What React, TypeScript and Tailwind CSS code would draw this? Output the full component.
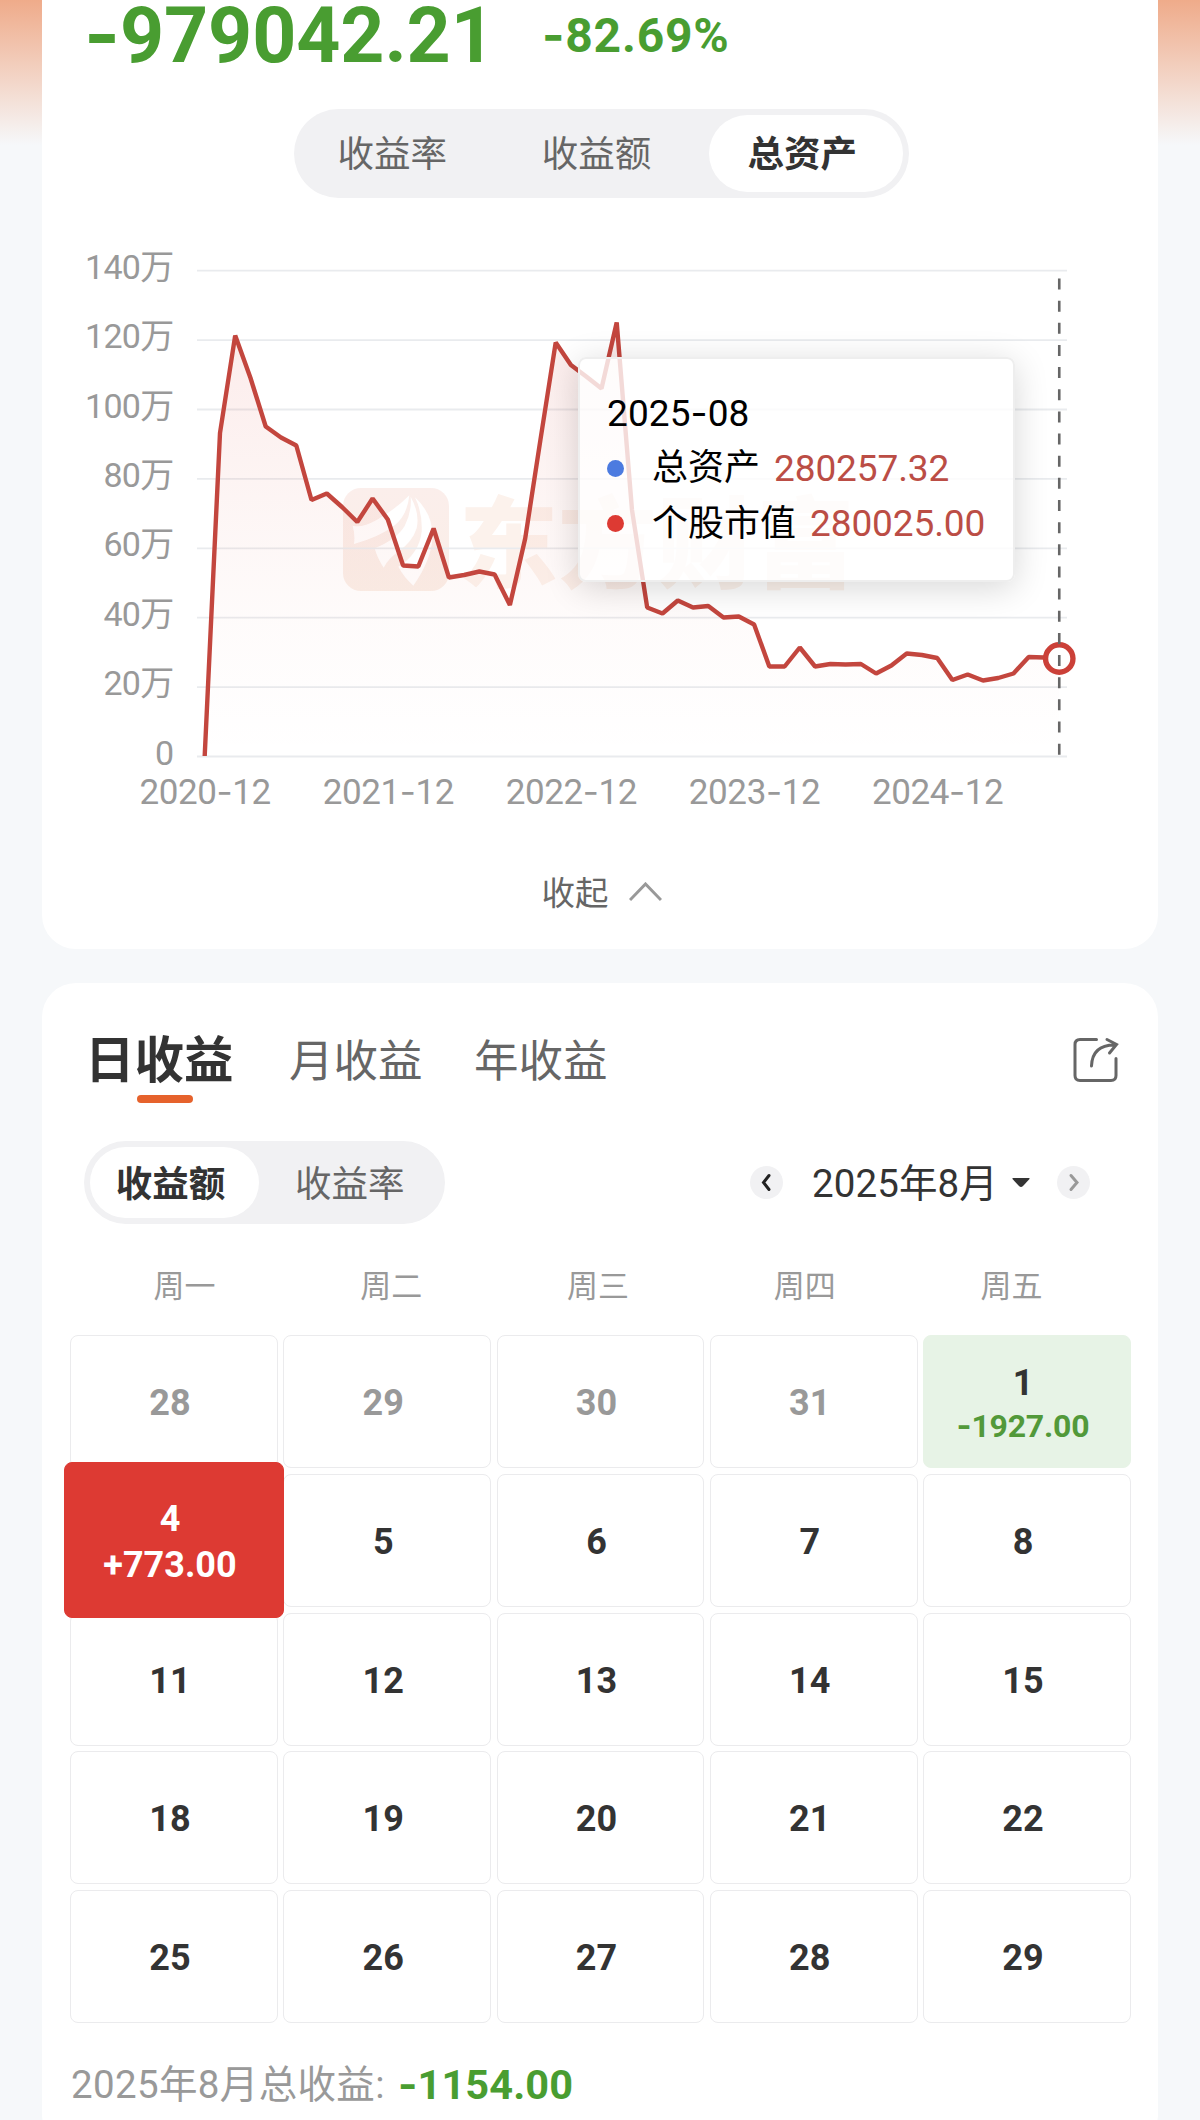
import clsx from 'clsx';
import { Fragment } from 'react';

const GRID_LABELS = ['140万', '120万', '100万', '80万', '60万', '40万', '20万', '0'];
const YEAR_LABELS = ['2020-12', '2021-12', '2022-12', '2023-12', '2024-12'];
const WEEKDAYS = ['周一', '周二', '周三', '周四', '周五'];

// one value per month, 2020-12 to 2025-08, as a height in the chart's own units
const SERIES = [
    756, 433, 335.5, 378, 426.5, 437.5, 445.5, 500, 493.5, 507, 522, 498.5, 519.5, 565.5, 566.5, 528.5, 577.5, 575, 571.5,
    574.5, 605, 538.5, 440, 342.5, 365, 376.5, 388.5, 322.5, 510, 607.5, 613.5, 600.5, 607.5, 606, 617.5, 616.5, 624.5,
    666.5, 666.5, 647.5, 666.5, 664, 664.5, 664, 673.5, 665.5, 653.5, 655, 658, 680, 674.5, 680.5, 678, 673.5, 657, 657.5,
    658.5,
];

type Day = { day: number; muted?: boolean; amount?: string; tone?: 'loss' | 'selected' };

const DAYS: Day[] = [
    { day: 28, muted: true },
    { day: 29, muted: true },
    { day: 30, muted: true },
    { day: 31, muted: true },
    { day: 1, amount: '-1927.00', tone: 'loss' },
    { day: 4, amount: '+773.00', tone: 'selected' },
    ...[5, 6, 7, 8, 11, 12, 13, 14, 15, 18, 19, 20, 21, 22, 25, 26, 27, 28, 29].map((day) => ({ day })),
];

const X0 = 204.7;
const STEP = 15.26;
const BASE = 756.5;

export default function App() {
    return (
        <div className="h-[2120px] w-[1200px] overflow-hidden bg-[#f6f8fa] bg-[linear-gradient(#efab8a,#f6f8fa_145px)] px-[42px] font-['Roboto','Noto_Sans_CJK_SC',sans-serif] leading-none text-[#333]">
            <section className="relative h-[949px] rounded-b-[34px] bg-white">
                <div className="flex h-[109px] items-start pl-[42px] font-bold text-[#499d31]">
                    <span className="w-[415px] text-[77px] leading-[69px] tracking-[-0.1px]">
                        <Num text="-979042.21" />
                    </span>
                    <span className="mt-[11px] ml-[43px] text-[48px] tracking-[0.8px]">
                        <Num text="-82.69%" />
                    </span>
                </div>

                <div className="mx-auto flex h-[89px] w-[615px] translate-x-px items-center rounded-full bg-[#f1f1f3] p-[6px] text-[36.5px] text-[#666]">
                    <span className="w-[205px] pt-[4px] pl-[38px]">收益率</span>
                    <span className="w-[206px] pt-[4px] pl-[38px]">收益额</span>
                    <span className="flex h-[77px] w-[194px] items-center justify-center rounded-full bg-white pt-[4px] pr-[7px] font-bold text-[#333]">
                        总资产
                    </span>
                </div>

                <div className="-mx-[42px] h-[640px]">
                    <AssetChart />
                </div>
                <Tooltip />

                <button type="button" className="mx-auto flex items-center gap-[20px] pt-[37px] pl-[3px] text-[33.5px] text-[#666]">
                    <span className="pt-[2px]">收起</span>
                    <svg className="-mt-[2px] h-[20px] w-[33px]" viewBox="0 0 33 20" fill="none" stroke="#999" strokeWidth="3">
                        <path d="M1 18 16.500 2 32 18" />
                    </svg>
                </button>
            </section>

            <section className="mt-[34px] h-[1165px] rounded-[34px] bg-white pt-[52px]">
                <div className="flex h-[50px] items-center pr-[39px] pl-[43px] text-[44.5px] text-[#666]">
                    <span className="relative w-[203px] pt-[4px] text-[49.5px] font-bold text-[#333]">
                        日收益
                        <i className="absolute top-[62px] left-[52px] h-[8px] w-[56px] rounded-full bg-[#e6622c]" />
                    </span>
                    <span className="w-[186px] pt-[4px] pl-px">月收益</span>
                    <span className="flex-1 pt-[4px]">年收益</span>
                    <ShareIcon />
                </div>

                <div className="mt-[56px] flex h-[83px] items-center pr-[68px] pl-[42px]">
                    <div className="flex h-[83px] w-[361px] items-center rounded-full bg-[#f1f1f3] p-[6px] text-[36.5px] text-[#666]">
                        <span className="flex h-[71px] w-[169px] items-center justify-center rounded-full bg-white pt-[5px] pr-[8px] font-bold text-[#333]">
                            收益额
                        </span>
                        <span className="pt-[5px] pl-[36px]">收益率</span>
                    </div>
                    <div className="ml-auto flex items-center">
                        <RoundArrow d="M19 9.500 13.500 16.500 19 23.500" color="#222" />
                        <span className="ml-[29px] w-[182px] pt-[4px] text-[38.5px] tracking-[0.1px] whitespace-nowrap">2025年8月</span>
                        <svg className="mr-[27px] ml-[18px] h-[9px] w-[18px]" viewBox="0 0 18 9">
                            <path d="M1 0h16q1 0 .5 1L11 8q-2 2-4 0L.5 1Q0 0 1 0Z" fill="#333" />
                        </svg>
                        <RoundArrow d="M14 9.500 20 16.500 14 23.500" color="#999" />
                    </div>
                </div>

                <div className="mt-[47px] ml-[39px] grid w-[1034px] grid-cols-5 text-center text-[31px] text-[#999]">
                    {WEEKDAYS.map((w) => (
                        <span key={w}>{w}</span>
                    ))}
                </div>

                <div className="mt-[33px] ml-[28px] grid w-[1061px] auto-rows-[133px] grid-cols-5 gap-x-[5.3px] gap-y-[5.8px]">
                    {DAYS.map((d, i) => (
                        <DayCell key={i} {...d} />
                    ))}
                </div>

                <div className="mt-[41px] flex items-center pl-[29px] text-[38.5px] text-[#999]">
                    <span className="w-[327px] tracking-[0.35px] whitespace-nowrap">2025年8月总收益:</span>
                    <span className="text-[41.5px] font-bold tracking-[0.1px] text-[#499d31]">
                        <Num text="-1154.00" />
                    </span>
                </div>
            </section>
        </div>
    );
}

// Roboto's hyphen is very short, so minus signs are set in Inter
function Num({ text }: { text: string }) {
    return (
        <>
            {text.split('-').map((part, i) => (
                <Fragment key={i}>
                    {i > 0 && <span className="font-['Inter',sans-serif]">-</span>}
                    {part}
                </Fragment>
            ))}
        </>
    );
}

function DayCell({ day, muted, amount, tone }: Day) {
    return (
        <div
            className={clsx(
                'flex flex-col items-center justify-center rounded-lg border pt-[3px] pr-[8px] text-[36px] font-bold',
                muted && 'text-[#999]',
                !tone && 'border-[#ebebed]',
                tone === 'loss' && 'border-[#e7f3e6] bg-[#e7f3e6]',
                tone === 'selected' && 'z-10 -mx-[6px] -my-[11.500px] border-[#dd3a33] bg-[#dd3a33] text-white',
            )}
        >
            <span>{day}</span>
            {amount && (
                <span className={clsx(tone === 'loss' ? 'mt-[9px] text-[32px] tracking-[-0.2px] text-[#52993a]' : 'mt-[10px] text-[36px]')}>
                    <Num text={amount} />
                </span>
            )}
        </div>
    );
}

function AssetChart() {
    const line = SERIES.map((y, i) => `${(X0 + i * STEP).toFixed(1)},${y}`).join(' ');
    const lastX = X0 + (SERIES.length - 1) * STEP;

    return (
        <svg className="h-[640px] w-[1200px]" viewBox="0 198 1200 640">
            <defs>
                <linearGradient id="area" x1="0" y1="320" x2="0" y2={BASE} gradientUnits="userSpaceOnUse">
                    <stop offset="0" stopColor="#dd3a33" stopOpacity="0.1" />
                    <stop offset="0.7" stopColor="#dd4a33" stopOpacity="0.02" />
                    <stop offset="1" stopColor="#dd4a33" stopOpacity="0" />
                </linearGradient>
                <linearGradient id="logo" x1="0" y1="0" x2="0" y2="1">
                    <stop offset="0" stopColor="#fbeeeb" />
                    <stop offset="1" stopColor="#faeee7" />
                </linearGradient>
            </defs>

            {/* brand watermark behind the series */}
            <rect x="343" y="488" width="106" height="103" rx="18" fill="url(#logo)" />
            <g transform="translate(330 470) scale(0.3333)" fill="#fff">
                <path d="M68 167Q95 175 140 150Q200 115 238 76Q232 135 195 165Q150 200 72 222Q76 195 68 167Z" />
                <path d="M134 235Q200 208 224 168Q246 125 242 80Q270 130 260 175Q248 215 205 245Q175 265 161 293Q142 265 134 235Z" />
                <path d="M255 82Q308 130 308 200Q304 270 250 347Q222 322 205 290Q268 250 275 185Q278 130 255 82Z" />
            </g>
            <text x="459" y="580" fontSize="99" fontWeight="900" fill="#fcf2ec">
                东方财富
            </text>

            {GRID_LABELS.map((label, i) => (
                <g key={label}>
                    <path d={`M197 ${270.7 + i * 69.4}H1067`} stroke="#e9ebee" strokeWidth="1.8" />
                    <text x="173.500" y={278.7 + i * 69.4} textAnchor="end" fontSize="34" letterSpacing="-0.7" fill="#999">
                        {label}
                    </text>
                </g>
            ))}

            <polygon points={`${X0},${BASE} ${line} ${lastX},${BASE}`} fill="url(#area)" />
            <polyline points={line} fill="none" stroke="#c3463e" strokeWidth="4.400" strokeLinejoin="bevel" />

            <circle cx={lastX} cy="658.500" r="13.700" fill="#fff" stroke="#cb4038" strokeWidth="5.400" />
            <path d={`M${lastX} 278.500V756`} stroke="#666" strokeWidth="2.600" strokeDasharray="11 11.150" />

            {YEAR_LABELS.map((label, i) => (
                <text key={label} x={X0 + 0.5 + i * 183.1} y="804" textAnchor="middle" fontSize="35" letterSpacing="-0.4" fill="#999">
                    {label.slice(0, 4)}
                    <tspan fontFamily="Inter">-</tspan>
                    {label.slice(5)}
                </text>
            ))}
        </svg>
    );
}

function Tooltip() {
    return (
        <div className="absolute top-[357px] left-[536px] h-[225px] w-[437px] rounded-lg border-2 border-[#eee] bg-white/80 pt-[35px] pl-[27px] text-[36px] text-black shadow-[0_6px_34px_rgba(0,0,0,0.16)]">
            <p className="text-[37px] tracking-[0.1px]">
                <Num text="2025-08" />
            </p>
            <TooltipRow dot="bg-[#4c7be0]" label="总资产" value="280257.32" />
            <TooltipRow dot="bg-[#dd3a33]" label="个股市值" value="280025.00" />
        </div>
    );
}

function TooltipRow({ dot, label, value }: { dot: string; label: string; value: string }) {
    return (
        <p className="mt-[17px] flex h-[38.5px] items-center whitespace-nowrap">
            <i className={clsx('size-[17px] rounded-full', dot)} />
            <span className="ml-[28px]">{label}</span>
            <span className="ml-[14px] text-[37px] tracking-[-0.1px] text-[#bb4d45]">{value}</span>
        </p>
    );
}

function RoundArrow({ d, color }: { d: string; color: string }) {
    return (
        <svg className="size-[33px]" viewBox="0 0 33 33" fill="none" stroke={color} strokeWidth="3" strokeLinecap="round">
            <circle cx="16.500" cy="16.500" r="16.500" fill="#f1f1f3" stroke="none" />
            <path d={d} />
        </svg>
    );
}

function ShareIcon() {
    return (
        <svg className="h-[46px] w-[46px]" viewBox="0 0 46 46" fill="none" stroke="#666" strokeWidth="3" strokeLinecap="round">
            <path d="M23.500 2.500H7Q2 2.500 2 7.500V38.500Q2 43.500 7 43.500H38Q43 43.500 43 38.500V21.500" />
            <path d="M18.500 29C19 15 27 7.500 43 8M34 2.500 43.500 7.500 36.500 16" />
        </svg>
    );
}
